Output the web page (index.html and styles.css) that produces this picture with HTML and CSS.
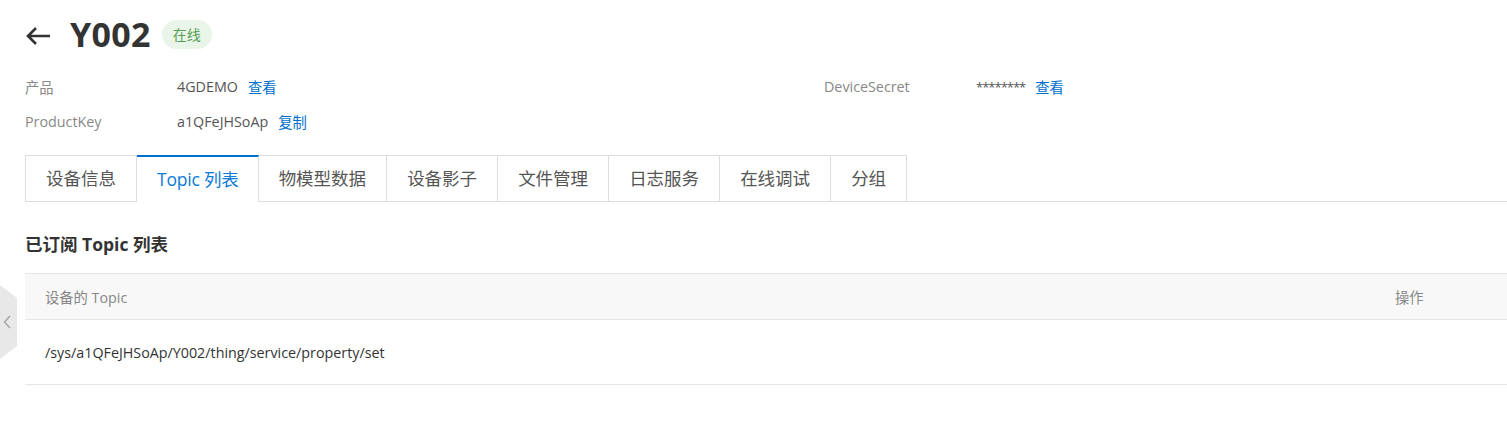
FILE: index.html
```html
<!DOCTYPE html>
<html lang="zh-CN">
<head>
<meta charset="utf-8">
<title>Y002</title>
<link rel="stylesheet" href="styles.css">
</head>
<body>
<div class="page">
  <div class="header">
    <svg class="back" width="26" height="20" viewBox="0 0 26 20"><path d="M25 10H3M11 2L3 10L11 18" fill="none" stroke="#333" stroke-width="2.6"/></svg>
    <h1 class="title">Y002</h1>
    <span class="badge">在线</span>
  </div>
  <div class="info">
    <div class="info-row">
      <div class="info-item"><span class="label">产品</span><span class="value">4GDEMO</span><a class="link">查看</a></div>
      <div class="info-item"><span class="label">DeviceSecret</span><span class="value secret">********</span><a class="link">查看</a></div>
    </div>
    <div class="info-row">
      <div class="info-item"><span class="label">ProductKey</span><span class="value">a1QFeJHSoAp</span><a class="link">复制</a></div>
    </div>
  </div>
  <div class="tabs">
    <div class="tab">设备信息</div>
    <div class="tab active">Topic 列表</div>
    <div class="tab">物模型数据</div>
    <div class="tab">设备影子</div>
    <div class="tab">文件管理</div>
    <div class="tab">日志服务</div>
    <div class="tab">在线调试</div>
    <div class="tab">分组</div>
    <div class="tab-fill"></div>
  </div>
  <h2 class="section-title">已订阅 Topic 列表</h2>
  <div class="table">
    <div class="thead">
      <div class="cell main">设备的 Topic</div>
      <div class="cell op">操作</div>
    </div>
    <div class="trow">
      <div class="cell main">/sys/a1QFeJHSoAp/Y002/thing/service/property/set</div>
      <div class="cell op"></div>
    </div>
  </div>
</div>
<div class="side-handle">
  <svg width="8" height="14" viewBox="0 0 8 14"><path d="M7 1L1.5 7L7 13" fill="none" stroke="#a8a8a8" stroke-width="1.5"/></svg>
</div>
</body>
</html>
```
FILE: styles.css
```css
* { box-sizing: border-box; }
html, body { margin: 0; padding: 0; background: #fff; }
body {
  font-family: "Open Sans", "Noto Sans CJK SC", sans-serif;
  color: #333;
  overflow: hidden;
}
.page { padding: 14px 0 0 25px; }
.header { display: flex; align-items: center; height: 40px; }
.back { display: block; margin-top: 4px; }
.title {
  margin: 0 0 0 19px;
  font-size: 34px;
  font-weight: 700;
  color: #333;
  line-height: 40px;
  letter-spacing: 0.3px;
}
.badge {
  margin-left: 11px;
  background: #e9f5e8;
  color: #55a052;
  font-size: 14px;
  height: 29px;
  line-height: 29px;
  padding: 0 11px;
  border-radius: 15px;
}
.info { margin-top: 15px; }
.info-row { display: flex; height: 35px; align-items: center; }
.info-item { display: flex; align-items: center; font-size: 14.3px; }
.info-item:first-child { width: 799px; flex-shrink: 0; }
.label { width: 152px; color: #888; flex-shrink: 0; }
.value { color: #555; }
.value.secret { font-size: 13px; letter-spacing: -1px; }
.link { color: #0070cc; margin-left: 10px; }
.tabs { display: flex; margin-top: 16px; height: 47px; }
.tab {
  border: 1px solid #ddd;
  border-left-width: 0;
  padding: 0 20px;
  font-size: 17.5px;
  color: #555;
  line-height: 45px;
  white-space: nowrap;
}
.tab:first-child { border-left-width: 1px; }
.tab.active {
  color: #0a7bd6;
  border-top: 2px solid #0070cc;
  border-bottom-color: #fff;
  line-height: 44px;
  padding: 0 19px 0 20px;
  letter-spacing: -0.2px;
}
.tab-fill { flex: 1; border-bottom: 1px solid #ddd; }
.section-title {
  margin: 31px 0 0;
  font-size: 17.5px;
  font-weight: 700;
  color: #333;
  line-height: 22px;
}
.table { margin-top: 18px; }
.thead, .trow { display: flex; align-items: center; }
.thead {
  height: 47px;
  background: #f8f8f8;
  border-top: 1px solid #e6e6e6;
  border-bottom: 1px solid #e6e6e6;
  font-size: 14.3px;
  color: #888;
}
.trow {
  height: 65px;
  border-bottom: 1px solid #e6e6e6;
  font-size: 14.3px;
  color: #333;
}
.cell.main { flex: 1; padding-left: 20px; }
.cell.op { width: 112px; }
.side-handle {
  position: absolute;
  left: 0;
  top: 285px;
  width: 17px;
  height: 74px;
  background: #e8e8e8;
  clip-path: polygon(0 0, 100% 13px, 100% 61px, 0 100%);
  display: flex;
  align-items: center;
  padding-left: 3px;
}
.side-handle svg { display: block; }
```
